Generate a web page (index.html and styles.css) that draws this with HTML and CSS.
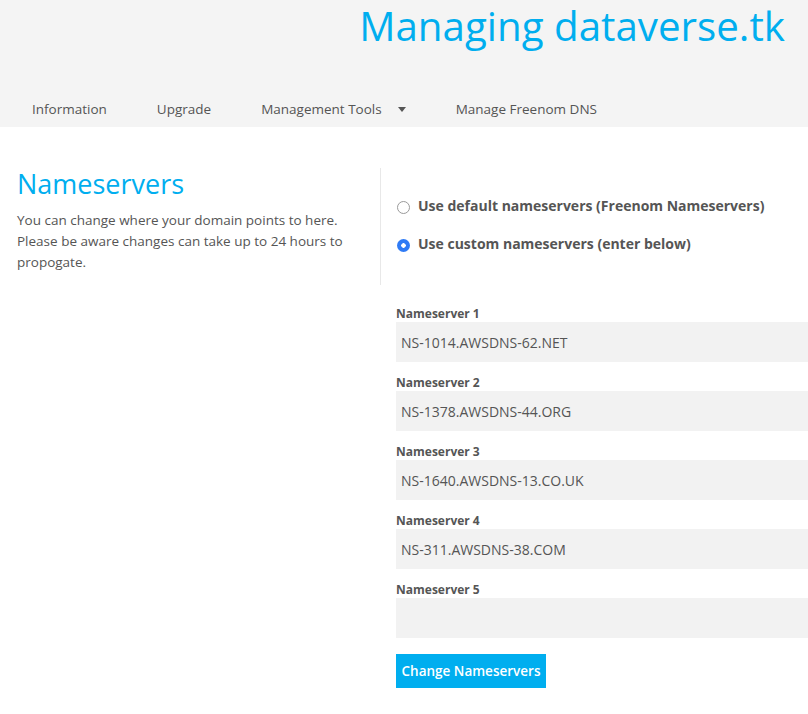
FILE: index.html
```html
<!DOCTYPE html>
<html>
<head>
<meta charset="utf-8">
<link rel="stylesheet" href="styles.css">
</head>
<body>
<header class="header">
  <h1 class="title">Managing dataverse.tk</h1>
  <nav class="nav">
    <a class="nav-item">Information</a>
    <a class="nav-item">Upgrade</a>
    <a class="nav-item">Management Tools <span class="caret"></span></a>
    <a class="nav-item">Manage Freenom DNS</a>
  </nav>
</header>
<main class="content">
  <section class="intro">
    <h2 class="intro-title">Nameservers</h2>
    <p class="intro-text">You can change where your domain points to here. Please be aware changes can take up to 24 hours to propogate.</p>
  </section>
  <section class="form">
    <div class="choices">
      <label class="choice"><input class="radio" type="radio" name="ns"><span>Use default nameservers (Freenom Nameservers)</span></label>
      <label class="choice"><input class="radio" type="radio" name="ns" checked><span>Use custom nameservers (enter below)</span></label>
    </div>
    <div class="fields">
      <div class="field"><label class="field-label">Nameserver 1</label><input class="field-input" type="text" value="NS-1014.AWSDNS-62.NET"></div>
      <div class="field"><label class="field-label">Nameserver 2</label><input class="field-input" type="text" value="NS-1378.AWSDNS-44.ORG"></div>
      <div class="field"><label class="field-label">Nameserver 3</label><input class="field-input" type="text" value="NS-1640.AWSDNS-13.CO.UK"></div>
      <div class="field"><label class="field-label">Nameserver 4</label><input class="field-input" type="text" value="NS-311.AWSDNS-38.COM"></div>
      <div class="field"><label class="field-label">Nameserver 5</label><input class="field-input" type="text" value=""></div>
    </div>
    <button class="submit" type="button">Change Nameservers</button>
  </section>
</main>
</body>
</html>
```

FILE: styles.css
```css
* { box-sizing: border-box; }
html, body { margin: 0; padding: 0; overflow: hidden; }
body {
  font-family: "Open Sans", "Noto Sans", sans-serif;
  color: #555;
  background: #fff;
  width: 808px;
  height: 714px;
}
.header {
  background: #f4f4f4;
  height: 127px;
  display: flex;
  flex-direction: column;
}
.title {
  margin: 0;
  padding: 0 23px 0 0;
  text-align: right;
  font-weight: 400;
  font-size: 40.3px;
  line-height: 52px;
  color: #00aeef;
}
.nav {
  display: flex;
  margin-top: 47px;
  padding-left: 7px;
}
.nav-item {
  padding: 0 25px;
  font-size: 13.5px;
  line-height: 20px;
  color: #555;
  display: flex;
  align-items: center;
}
.caret {
  display: inline-block;
  margin-left: 16px;
  width: 0; height: 0;
  border-left: 4px solid transparent;
  border-right: 4px solid transparent;
  border-top: 5px solid #555;
}
.content {
  display: flex;
  padding: 41px 0 0 17px;
}
.intro {
  width: 364px;
  flex: none;
  height: 117px;
  border-right: 1px solid #e8e8e8;
}
.intro-title {
  margin: 0;
  font-weight: 400;
  font-size: 27px;
  line-height: 32px;
  color: #00aeef;
}
.intro-text {
  margin: 10px 0 0;
  font-size: 13.5px;
  line-height: 21px;
  width: 340px;
}
.form {
  flex: none;
  width: 460px;
  padding: 28px 0 0 15px;
}
.choices {
  display: flex;
  flex-direction: column;
  gap: 19px;
}
.choice {
  display: flex;
  align-items: center;
  font-weight: 700;
  font-size: 14px;
  line-height: 19px;
  color: #555;
}
.radio {
  appearance: none;
  -webkit-appearance: none;
  margin: 4px 8px 0 1px;
  width: 13px; height: 13px;
  border-radius: 50%;
  border: 1px solid #9a9a9a;
  background: #fff;
  flex: none;
}
.radio:checked {
  border: none;
  background: radial-gradient(circle, #fff 0 2px, #2f7bf5 2.5px);
}
.fields {
  margin-top: 53px;
  display: flex;
  flex-direction: column;
  gap: 13px;
}
.field {
  display: flex;
  flex-direction: column;
}
.field-label {
  font-weight: 700;
  font-size: 12px;
  line-height: 16px;
  color: #555;
}
.field-input {
  margin-top: 0;
  height: 40px;
  border: none;
  background: #f2f2f2;
  font-family: inherit;
  font-size: 14px;
  color: #555;
  padding: 0 5px;
  width: 460px;
  outline: none;
}
.submit {
  display: block;
  margin-top: 16px;
  background: #00aeef;
  color: #fff;
  border: none;
  font-family: inherit;
  font-size: 13.5px;
  font-weight: 600;
  height: 34px;
  width: 150px;
  padding: 0;
  white-space: nowrap;
}
```
